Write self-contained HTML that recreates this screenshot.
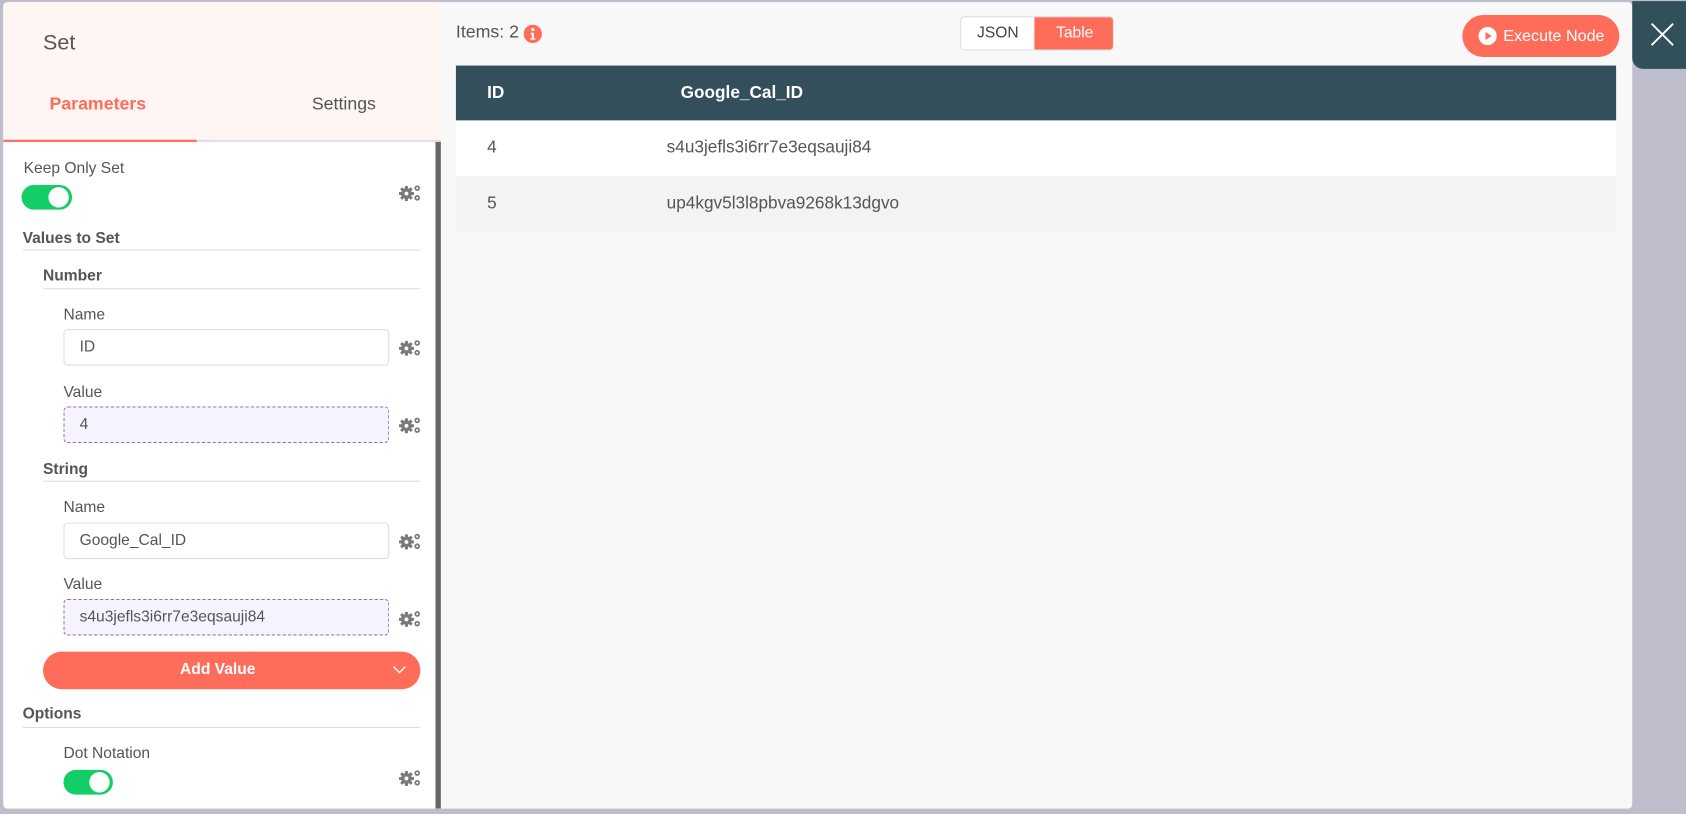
<!DOCTYPE html>
<html><head><meta charset="utf-8"><style>
*{box-sizing:border-box;margin:0;padding:0}
html,body{width:1686px;height:814px;overflow:hidden;background:#bdbdcc;font-family:"Liberation Sans",sans-serif;color:#555}
#w{position:absolute;left:0;top:0;width:1568px;height:757px;transform:scale(1.07526);transform-origin:0 0}
.a{position:absolute}
.modal{left:3px;top:2px;width:1515px;height:750px;background:#f8f8f8;border-radius:4px;overflow:hidden}
.lbl{position:absolute;font-size:14.5px;color:#555;line-height:16px}
.sec{position:absolute;font-size:14.5px;font-weight:bold;color:#555;line-height:16px}
.line{position:absolute;height:1px;background:#dcdfe6}
.inp{position:absolute;left:59px;width:303px;height:34px;border:1px solid #dcdfe6;border-radius:4px;background:#fff;font-size:14.5px;padding-left:14px;line-height:32px;color:#555}
.dash{border:1px dashed #a0708f;background:#f5f3ff}
.tog{position:absolute;width:47px;height:23px;border-radius:12px;background:#13ce66}
.tog:after{content:"";position:absolute;right:3px;top:2px;width:19px;height:19px;border-radius:50%;background:#fff}
.gear{position:absolute;left:371px;width:21px;height:16px}
.th{position:absolute;top:0;font-size:16px;font-weight:bold;color:#fff;line-height:51px}
.td{position:absolute;font-size:16px;color:#555;line-height:51px}
</style></head><body><div id="w">
<svg width="0" height="0" style="position:absolute"><defs>
<g id="g" fill="#7a7a7a">
<circle cx="7" cy="9" r="5"/>
<rect x="5.6" y="2" width="2.8" height="14" rx=".5"/>
<rect x="5.6" y="2" width="2.8" height="14" rx=".5" transform="rotate(45 7 9)"/>
<rect x="5.6" y="2" width="2.8" height="14" rx=".5" transform="rotate(90 7 9)"/>
<rect x="5.6" y="2" width="2.8" height="14" rx=".5" transform="rotate(135 7 9)"/>
<circle cx="7" cy="9" r="1.8" fill="#fff"/>
<circle cx="17" cy="4" r="2.6"/><circle cx="17" cy="4" r="1" fill="#fff"/>
<circle cx="17" cy="13" r="2.6"/><circle cx="17" cy="13" r="1" fill="#fff"/>
</g>
</defs></svg>
<div class="a modal">
 <div class="a" style="left:0;top:0;width:407px;height:750px;background:#fff"></div>
 <div class="a" style="left:0;top:0;width:407px;height:128px;background:#fff5f3"></div>
 <div class="a" style="left:37px;top:27px;font-size:20px;color:#555">Set</div>
 <div class="a" style="left:43px;top:86px;font-size:16.5px;font-weight:bold;color:#ff6d5a">Parameters</div>
 <div class="a" style="left:287px;top:86px;font-size:16.5px;color:#555">Settings</div>
 <div class="a" style="left:0;top:128px;width:407px;height:2px;background:#dcdfe6"></div>
 <div class="a" style="left:0;top:128px;width:180px;height:2px;background:#ff6d5a"></div>
 <div class="a" style="left:402px;top:130px;width:5px;height:620px;background:#666"></div>
</div>
<div class="lbl" style="left:22px;top:149px">Keep Only Set</div>
<div class="tog" style="left:20px;top:172px"></div>
<svg class="gear" style="top:171px" viewBox="0 0 21 16"><use href="#g"/></svg>
<div class="sec" style="left:21px;top:214px">Values to Set</div>
<div class="line" style="left:21px;top:232px;width:370px"></div>
<div class="sec" style="left:40px;top:249px">Number</div>
<div class="line" style="left:40px;top:268px;width:351px"></div>
<div class="lbl" style="left:59px;top:285px">Name</div>
<div class="inp" style="top:306px">ID</div>
<svg class="gear" style="top:315px" viewBox="0 0 21 16"><use href="#g"/></svg>
<div class="lbl" style="left:59px;top:357px">Value</div>
<div class="inp dash" style="top:378px">4</div>
<svg class="gear" style="top:387px" viewBox="0 0 21 16"><use href="#g"/></svg>
<div class="sec" style="left:40px;top:429px">String</div>
<div class="line" style="left:40px;top:447px;width:351px"></div>
<div class="lbl" style="left:59px;top:464px">Name</div>
<div class="inp" style="top:486px">Google_Cal_ID</div>
<svg class="gear" style="top:495px" viewBox="0 0 21 16"><use href="#g"/></svg>
<div class="lbl" style="left:59px;top:536px">Value</div>
<div class="inp dash" style="top:557px">s4u3jefls3i6rr7e3eqsauji84</div>
<svg class="gear" style="top:567px" viewBox="0 0 21 16"><use href="#g"/></svg>
<div class="a" style="left:40px;top:606px;width:351px;height:35px;border-radius:18px;background:#ff6d5a;color:#fff;font-weight:bold;font-size:14.5px;text-align:center;line-height:35px;padding-right:26px">Add Value</div>
<svg class="a" style="left:365px;top:618px" width="13" height="9" viewBox="0 0 13 9"><path d="M1 2l5.5 5.5L12 2" fill="none" stroke="#fff" stroke-width="1.3"/></svg>
<div class="sec" style="left:21px;top:656px">Options</div>
<div class="line" style="left:21px;top:676px;width:370px"></div>
<div class="lbl" style="left:59px;top:693px">Dot Notation</div>
<div class="tog" style="left:59px;top:716px;width:46px"></div>
<svg class="gear" style="top:715px" viewBox="0 0 21 16"><use href="#g"/></svg>

<div class="a" style="left:424px;top:21px;font-size:16.5px;color:#555">Items: 2</div>
<svg class="a" style="left:487px;top:23px" width="17" height="17" viewBox="0 0 17 17"><circle cx="8.5" cy="8.5" r="8.5" fill="#ff6d5a"/><circle cx="8.5" cy="4.5" r="1.5" fill="#fff"/><path d="M6.5 7.5h3v5h1.3v1.5H6.3v-1.5h1.3V9H6.5z" fill="#fff"/></svg>
<div class="a" style="left:893px;top:15px;width:143px;height:32px;border:1px solid #dcdfe6;border-radius:4px;background:#fff;overflow:hidden">
 <div class="a" style="left:0;top:0;width:68px;height:30px;text-align:center;line-height:30px;font-size:14.5px;color:#444">JSON</div>
 <div class="a" style="left:68px;top:-1px;width:75px;height:32px;background:#ff6d5a;text-align:center;line-height:32px;font-size:14.5px;color:#fff">Table</div>
</div>
<div class="a" style="left:1360px;top:14px;width:146px;height:39px;border-radius:20px;background:#ff6d5a;color:#fff;font-size:15px;line-height:39px;padding-left:38px">Execute Node</div>
<svg class="a" style="left:1375px;top:25px" width="17" height="17" viewBox="0 0 17 17"><circle cx="8.5" cy="8.5" r="8.5" fill="#fff"/><path d="M6.5 4.8v7.4l5.8-3.7z" fill="#ff6d5a"/></svg>
<div class="a" style="left:1518px;top:1px;width:60px;height:63px;background:#315059;border-radius:0 0 0 10px"></div>
<svg class="a" style="left:1535px;top:21px" width="22" height="22" viewBox="0 0 22 22"><path d="M1 1l20 20M21 1L1 21" stroke="#fff" stroke-width="1.8"/></svg>

<div class="a" style="left:424px;top:61px;width:1079px;height:51px;background:#334f5c">
 <div class="th" style="left:29px">ID</div><div class="th" style="left:209px">Google_Cal_ID</div></div>
<div class="a" style="left:424px;top:112px;width:1079px;height:52px;background:#fff">
 <div class="td" style="left:29px">4</div><div class="td" style="left:196px">s4u3jefls3i6rr7e3eqsauji84</div></div>
<div class="a" style="left:424px;top:164px;width:1079px;height:51px;background:#f3f3f3">
 <div class="td" style="left:29px">5</div><div class="td" style="left:196px">up4kgv5l3l8pbva9268k13dgvo</div></div>
</div></body></html>
